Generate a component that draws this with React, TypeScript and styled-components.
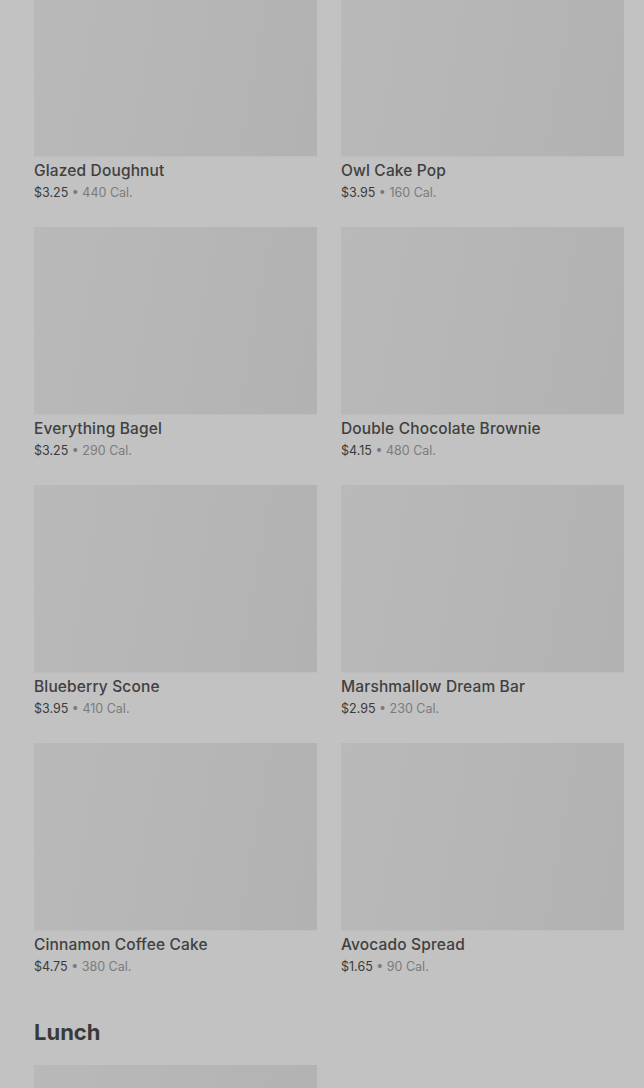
import React from "react";
import styled, { createGlobalStyle } from "styled-components";

const Global = createGlobalStyle`
  html, body { margin: 0; padding: 0; background: #c2c2c2; }
  body { font-family: Inter, "Noto Sans", Arial, sans-serif; overflow: hidden; }
`;

const Page = styled.div`
  width: 644px;
  height: 1088px;
  overflow: hidden;
  background: #c2c2c2;
`;

const Content = styled.div`
  margin-top: -31px;
  padding: 0 20px 0 34px;
`;

const Grid = styled.div`
  display: grid;
  grid-template-columns: 283px 283px;
  column-gap: 24px;
  row-gap: 24px;
`;

const Card = styled.div`
  display: flex;
  flex-direction: column;
`;

const Thumb = styled.div`
  height: 188px;
  background: linear-gradient(100deg, #b9b9b9 0%, #b6b6b6 45%, #b2b2b2 100%);
  border-bottom: 1px solid #bdbdbd;
  box-sizing: border-box;
`;

const Name = styled.div`
  margin-top: 3px;
  font-size: 15.5px;
  line-height: 22px;
  font-weight: 500;
  color: #404040;
  letter-spacing: 0.15px;
`;

const Meta = styled.div`
  margin-top: 1px;
  font-size: 12.5px;
  line-height: 20px;
  color: #7b7b7b;
`;

const Price = styled.span`
  color: #3b3b3b;
`;

const Section = styled.h2`
  margin: 39px 0 17px;
  font-size: 22px;
  line-height: 32px;
  font-weight: 700;
  color: #3a3a3a;
`;

const items = [
  ["Glazed Doughnut", "$3.25", "440 Cal."],
  ["Owl Cake Pop", "$3.95", "160 Cal."],
  ["Everything Bagel", "$3.25", "290 Cal."],
  ["Double Chocolate Brownie", "$4.15", "480 Cal."],
  ["Blueberry Scone", "$3.95", "410 Cal."],
  ["Marshmallow Dream Bar", "$2.95", "230 Cal."],
  ["Cinnamon Coffee Cake", "$4.75", "380 Cal."],
  ["Avocado Spread", "$1.65", "90 Cal."],
];

export default function App() {
  return (
    <Page>
      <Global />
      <Content>
        <Grid>
          {items.map(([n, p, c]) => (
            <Card key={n}>
              <Thumb />
              <Name>{n}</Name>
              <Meta>
                <Price>{p}</Price> • {c}
              </Meta>
            </Card>
          ))}
        </Grid>
        <Section>Lunch</Section>
        <Grid>
          <Card>
            <Thumb />
          </Card>
        </Grid>
      </Content>
    </Page>
  );
}
